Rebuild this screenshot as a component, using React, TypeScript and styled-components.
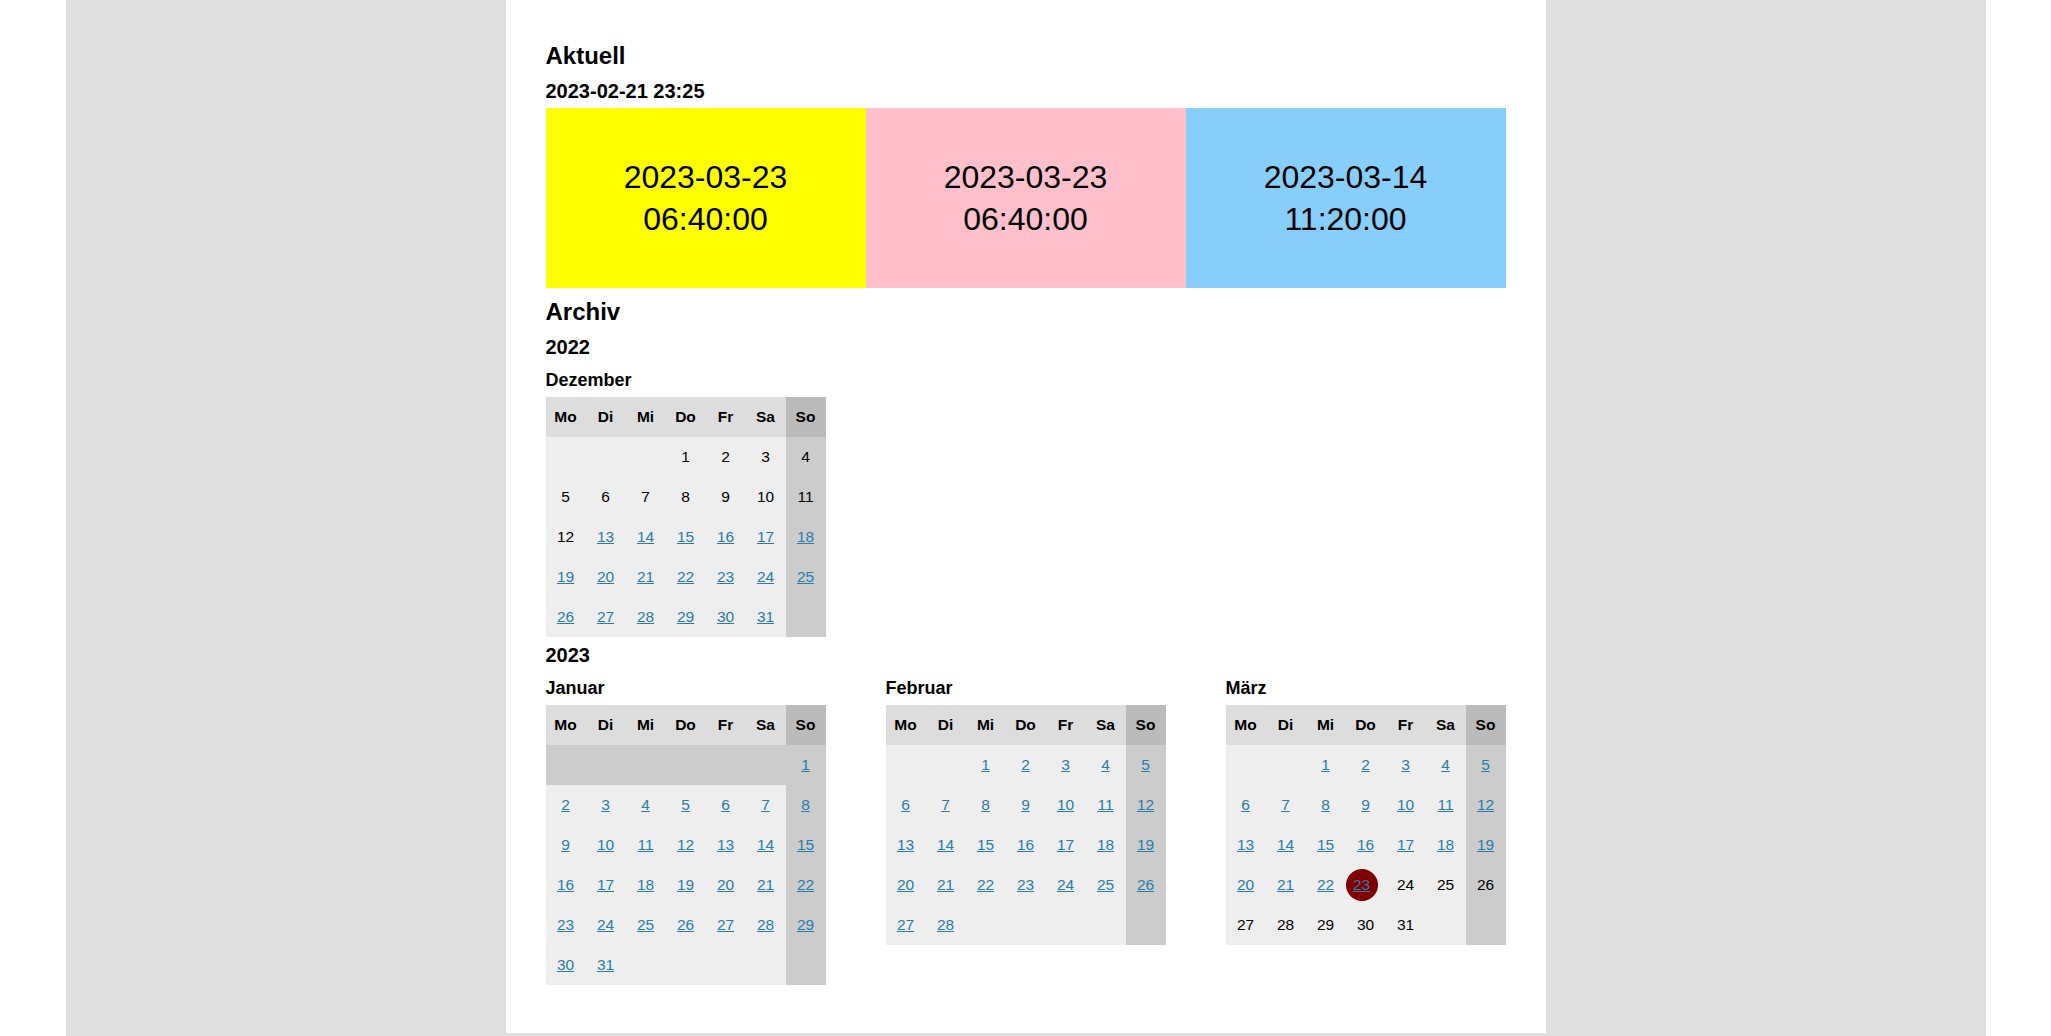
import React, {FC} from 'react';
import styled, {createGlobalStyle} from 'styled-components';

const GlobalStyle = createGlobalStyle`
  html, body {
    margin: 0;
    padding: 0;
    background: #ffffff;
    font-family: "Liberation Sans", Arial, sans-serif;
    color: #000;
  }
`

const Backdrop = styled.div`
  max-width: 1920px;
  min-height: 100vh;
  margin: 0 auto;
  background-color: #dfdfdf;
`

const Page = styled.main`
  width: 1040px;
  margin: 0 auto;
  box-sizing: border-box;
  padding: 42px 40px 48px;
  background-color: #ffffff;
`

const SectionTitle = styled.h2<{ $gap?: number }>`
  margin: ${p => p.$gap ?? 0}px 0 9px;
  font-size: 24px;
  line-height: 28px;
  font-weight: bold;
`

const SubTitle = styled.h3<{ $top?: number; $bottom?: number }>`
  margin: ${p => p.$top ?? 0}px 0 ${p => p.$bottom ?? 10}px;
  font-size: 20px;
  line-height: 24px;
  font-weight: bold;
`

const Boxes = styled.div`
  display: grid;
  grid-template-columns: repeat(3, 1fr);
`

const Box = styled.div<{ $bg: string }>`
  height: 180px;
  display: flex;
  align-items: center;
  justify-content: center;
  text-align: center;
  background-color: ${p => p.$bg};
  font-size: 32px;
  line-height: 42px;
`

const Months = styled.div`
  display: flex;
  justify-content: space-between;
`

const MonthBlock = styled.section``

const MonthTitle = styled.h4`
  margin: 0 0 6px;
  font-size: 18px;
  line-height: 22px;
  font-weight: bold;
`

const CalTable = styled.table`
  border-collapse: collapse;
  border-spacing: 0;
  font-size: 15.5px;
`

const HeadCell = styled.th<{ $sun?: boolean }>`
  width: 40px;
  height: 40px;
  padding: 0;
  text-align: center;
  font-weight: bold;
  background-color: ${p => (p.$sun ? '#bbbbbb' : '#dddddd')};
`

const Row = styled.tr<{ $dim?: boolean }>`
  background-color: ${p => (p.$dim ? '#cccccc' : '#eeeeee')};
`

const DayCell = styled.td<{ $sun?: boolean }>`
  width: 40px;
  height: 40px;
  padding: 0;
  text-align: center;
  background-color: ${p => (p.$sun ? '#cccccc' : 'transparent')};
`

const DayLink = styled.a`
  color: #2a7dab;
  text-decoration: underline;
`

const Today = styled.span`
  display: inline-flex;
  align-items: center;
  justify-content: center;
  width: 32px;
  height: 32px;
  margin-right: 8px;
  border-radius: 50%;
  background-color: #800000;
`

type Day = { n: number; kind: 'plain' | 'link' | 'today' } | null

const WEEKDAYS = ['Mo', 'Di', 'Mi', 'Do', 'Fr', 'Sa', 'So']

const buildMonth = (offset: number, days: number, kindOf: (n: number) => 'plain' | 'link' | 'today'): Day[][] => {
    const cells: Day[] = []
    for (let i = 0; i < offset; i++) cells.push(null)
    for (let n = 1; n <= days; n++) cells.push({n, kind: kindOf(n)})
    while (cells.length % 7) cells.push(null)
    const rows: Day[][] = []
    for (let i = 0; i < cells.length; i += 7) rows.push(cells.slice(i, i + 7))
    return rows
}

const Month: FC<{ name: string; rows: Day[][] }> = ({name, rows}) => (
    <MonthBlock>
        <MonthTitle>{name}</MonthTitle>
        <CalTable>
            <thead>
            <tr>
                {WEEKDAYS.map((d, i) => <HeadCell key={d} $sun={i === 6}>{d}</HeadCell>)}
            </tr>
            </thead>
            <tbody>
            {rows.map((row, r) => (
                <Row key={r} $dim={row.slice(0, 6).every(c => c === null)}>
                    {row.map((c, i) => (
                        <DayCell key={i} $sun={i === 6}>
                            {c && c.kind === 'plain' && c.n}
                            {c && c.kind === 'link' && <DayLink href="#">{c.n}</DayLink>}
                            {c && c.kind === 'today' && <Today><DayLink href="#">{c.n}</DayLink></Today>}
                        </DayCell>
                    ))}
                </Row>
            ))}
            </tbody>
        </CalTable>
    </MonthBlock>
)

const dez = buildMonth(3, 31, n => (n < 13 ? 'plain' : 'link'))
const jan = buildMonth(6, 31, () => 'link')
const feb = buildMonth(2, 28, () => 'link')
const mar = buildMonth(2, 31, n => (n < 23 ? 'link' : n === 23 ? 'today' : 'plain'))

const App: FC = () => {
    return (
        <>
            <GlobalStyle/>
            <Backdrop>
                <Page>
                    <SectionTitle>Aktuell</SectionTitle>
                    <SubTitle $bottom={5}>2023-02-21 23:25</SubTitle>
                    <Boxes>
                        <Box $bg="#ffff00">2023-03-23<br/>06:40:00</Box>
                        <Box $bg="#ffc0cb">2023-03-23<br/>06:40:00</Box>
                        <Box $bg="#87cefa">2023-03-14<br/>11:20:00</Box>
                    </Boxes>
                    <SectionTitle $gap={10}>Archiv</SectionTitle>
                    <SubTitle>2022</SubTitle>
                    <Months>
                        <Month name="Dezember" rows={dez}/>
                    </Months>
                    <SubTitle $top={6}>2023</SubTitle>
                    <Months>
                        <Month name="Januar" rows={jan}/>
                        <Month name="Februar" rows={feb}/>
                        <Month name="März" rows={mar}/>
                    </Months>
                </Page>
            </Backdrop>
        </>
    );
};

export default App;
